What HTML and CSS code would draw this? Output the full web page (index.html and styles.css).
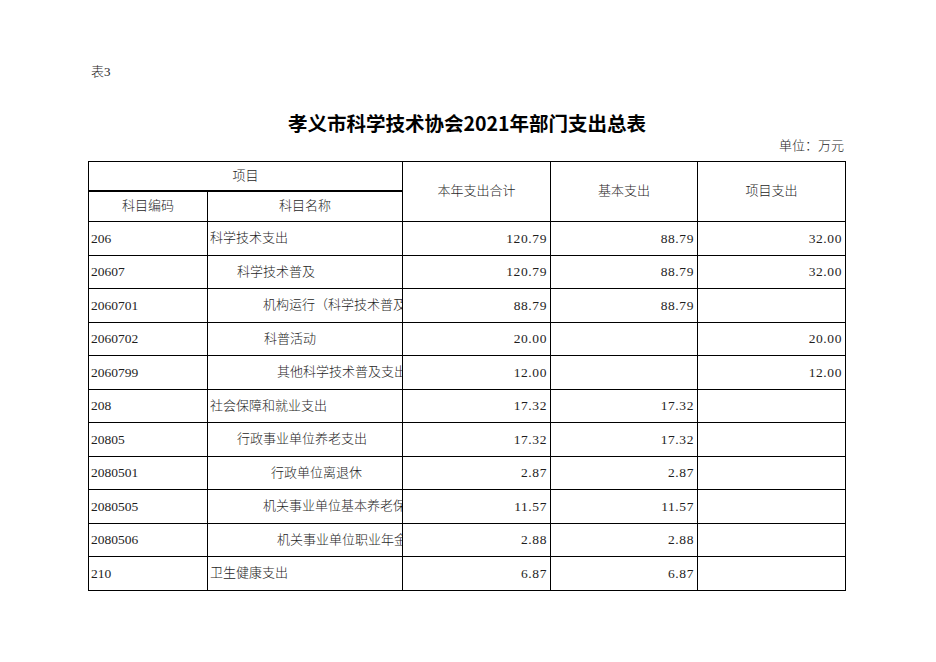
FILE: index.html
```html
<!DOCTYPE html>
<html lang="zh-CN">
<head>
<meta charset="utf-8">
<title>孝义市科学技术协会2021年部门支出总表</title>
<link rel="stylesheet" href="styles.css">
</head>
<body>
<div class="sheet">
  <div class="note">表3</div>
  <h1 class="title">孝义市科学技术协会2021年部门支出总表</h1>
  <div class="unit">单位：万元</div>
  <div class="grid">
    <div class="c hd span2 thick">项目</div>
    <div class="c hd rows2">本年支出合计</div>
    <div class="c hd rows2">基本支出</div>
    <div class="c hd rows2">项目支出</div>
    <div class="c hd">科目编码</div>
    <div class="c hd">科目名称</div>

    <div class="c code">206</div>
    <div class="c name l1">科学技术支出</div>
    <div class="c num">120.79</div>
    <div class="c num">88.79</div>
    <div class="c num">32.00</div>

    <div class="c code">20607</div>
    <div class="c name l2">科学技术普及</div>
    <div class="c num">120.79</div>
    <div class="c num">88.79</div>
    <div class="c num">32.00</div>

    <div class="c code">2060701</div>
    <div class="c name l3a">机构运行（科学技术普及）</div>
    <div class="c num">88.79</div>
    <div class="c num">88.79</div>
    <div class="c num"></div>

    <div class="c code">2060702</div>
    <div class="c name l3b">科普活动</div>
    <div class="c num">20.00</div>
    <div class="c num"></div>
    <div class="c num">20.00</div>

    <div class="c code">2060799</div>
    <div class="c name l3d">其他科学技术普及支出</div>
    <div class="c num">12.00</div>
    <div class="c num"></div>
    <div class="c num">12.00</div>

    <div class="c code">208</div>
    <div class="c name l1">社会保障和就业支出</div>
    <div class="c num">17.32</div>
    <div class="c num">17.32</div>
    <div class="c num"></div>

    <div class="c code">20805</div>
    <div class="c name l2">行政事业单位养老支出</div>
    <div class="c num">17.32</div>
    <div class="c num">17.32</div>
    <div class="c num"></div>

    <div class="c code">2080501</div>
    <div class="c name l3c">行政单位离退休</div>
    <div class="c num">2.87</div>
    <div class="c num">2.87</div>
    <div class="c num"></div>

    <div class="c code">2080505</div>
    <div class="c name l3a">机关事业单位基本养老保险缴费支出</div>
    <div class="c num">11.57</div>
    <div class="c num">11.57</div>
    <div class="c num"></div>

    <div class="c code">2080506</div>
    <div class="c name l3d">机关事业单位职业年金缴费支出</div>
    <div class="c num">2.88</div>
    <div class="c num">2.88</div>
    <div class="c num"></div>

    <div class="c code">210</div>
    <div class="c name l1">卫生健康支出</div>
    <div class="c num">6.87</div>
    <div class="c num">6.87</div>
    <div class="c num"></div>
  </div>
</div>
</body>
</html>
```
FILE: styles.css
```css
html, body {
  margin: 0;
  padding: 0;
  background: #ffffff;
}

body {
  font-family: "Liberation Serif", "Noto Sans CJK SC", serif;
  font-size: 13px;
  font-weight: 300;
  color: #1e1e1e;
}

.sheet {
  width: 758px;
  margin-left: 88px;
  padding-top: 62px;
}

.note {
  height: 20px;
  line-height: 20px;
  padding-left: 3px;
}

.title {
  margin: 28px 0 0 0;
  height: 25px;
  line-height: 25px;
  font-family: "Noto Sans CJK SC", sans-serif;
  font-size: 19.5px;
  font-weight: 700;
  color: #000000;
  text-align: center;
}

.unit {
  margin-top: 1px;
  height: 20px;
  line-height: 20px;
  text-align: right;
  padding-right: 2px;
  margin-bottom: 5px;
}

.grid {
  display: grid;
  grid-template-columns: 119px 195px 148px 147px 148px;
  grid-template-rows: 30px 30px 34px 33px 34px 33px 34px 33px 34px 33px 34px 33px 34px;
  border-top: 1px solid #000000;
  border-left: 1px solid #000000;
}

.c {
  box-sizing: border-box;
  display: flex;
  align-items: center;
  border-right: 1px solid #000000;
  border-bottom: 1px solid #000000;
  overflow: hidden;
  white-space: nowrap;
}

.hd {
  justify-content: center;
  padding-bottom: 4px;
}

.thick {
  border-bottom-width: 2px;
}

.span2 {
  grid-column: span 2;
}

.rows2 {
  grid-row: span 2;
}

.code {
  padding-left: 2px;
  font-size: 13.5px;
}

.name {
  padding-left: 2px;
  padding-bottom: 4px;
}

.l1 { padding-left: 2px; }
.l2 { padding-left: 29px; }
.l3a { padding-left: 55px; }
.l3b { padding-left: 56px; }
.l3c { padding-left: 63px; }
.l3d { padding-left: 69px; }

.num {
  justify-content: flex-end;
  padding-right: 3px;
  font-size: 13.5px;
  letter-spacing: 0.6px;
}
```
